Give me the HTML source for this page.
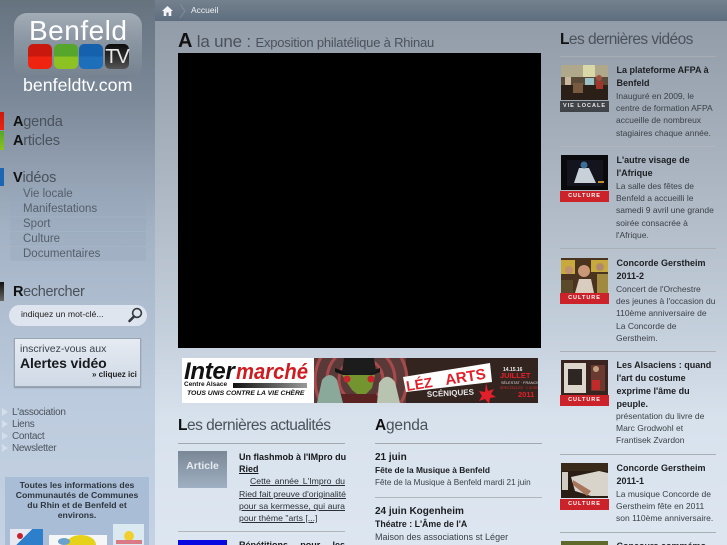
<!DOCTYPE html>
<html lang="fr"><head><meta charset="utf-8"><title>Benfeld TV</title>
<style>
html,body{margin:0;padding:0;width:727px;height:545px;overflow:hidden;background:#dde6f0}
#p{position:absolute;left:0;top:0;width:727px;height:545px;overflow:hidden;background:linear-gradient(#8f99a5 0,#a7b1bd 150px,#c4cfdc 330px,#d8e2ed 420px,#dde6f0 545px);font-family:"Liberation Sans",sans-serif;color:#222}
#p div{position:absolute;white-space:nowrap}
.h{color:#4a525b}
.h b{color:#111;font-weight:bold}
.m{font-size:14.5px;left:13px;color:#4a525b;letter-spacing:-.2px}
.sub{left:10px;width:136px;height:14px;background:rgba(150,165,185,.3);border-radius:2px}
.st{left:23px;font-size:11.5px;color:#555e6b}
.f{left:12px;font-size:10px;color:#4c545e;letter-spacing:-.3px}
.tri{left:2px;width:0;height:0;border-left:6px solid #d3deea;border-top:4px solid transparent;border-bottom:4px solid transparent}
.t{left:616.5px;font-size:9px;font-weight:bold;color:#1d1f22;line-height:13px}
.d{left:616px;font-size:8.5px;color:#3b4046;line-height:12.2px}
.hr{height:1px;background:#a6acb2;left:560px;width:156px}
.lab{left:560px;width:49px;height:11px;background:#cc2229;color:#fff;font-size:5.5px;font-weight:bold;text-align:center;line-height:11px;letter-spacing:1px}
.a{font-size:8.7px;color:#2b2f35;left:239px;width:106px;line-height:12.3px;text-align:justify;text-align-last:justify}
svg{position:absolute}
</style></head><body><div id="p">
<div style="left:0;top:0;width:155px;height:545px;background:linear-gradient(#66737f 0,#7c8999 100px,#a3b2c4 230px,#bccbdd 400px,#c4d2e3 545px)"></div>
<div style="left:155px;top:0;width:572px;height:21px;background:linear-gradient(#74818e,#5e6e7f)"></div>
<svg style="left:161px;top:5px" width="13" height="12" viewBox="0 0 13 12"><path d="M6.5 1 L12 6 H10.3 V11 H7.6 V7.5 H5.4 V11 H2.7 V6 H1 Z" fill="#f2f4f6"/></svg>
<svg style="left:179px;top:3px" width="8" height="16" viewBox="0 0 8 16"><path d="M1 1 L6 8 L1 15" fill="none" stroke="#7f8c99" stroke-width="1"/></svg>
<div style="left:191px;top:5px;font-size:8.5px;color:#eef1f4">Accueil</div>

<!-- logo -->
<div style="left:14px;top:13px;width:128px;height:65px;border-radius:13px;background:linear-gradient(#a2acb6,#8a95a2 45%,#76828f)"></div>
<div style="left:29px;top:15px;font-size:28px;color:#fff;letter-spacing:.5px;line-height:32px">Benfeld</div>
<div style="left:28px;top:44px;width:24px;height:25px;border-radius:5px;background:linear-gradient(#c9190f 50%,#ee2310 50%)"></div>
<div style="left:54px;top:44px;width:24px;height:25px;border-radius:5px;background:linear-gradient(#55a62a 50%,#8cc222 50%)"></div>
<div style="left:79px;top:44px;width:24px;height:25px;border-radius:5px;background:linear-gradient(#1561ad 50%,#1e6fb9 50%)"></div>
<div style="left:105px;top:44px;width:24px;height:25px;border-radius:5px;background:linear-gradient(#0c0c0c,#333 60%,#555);color:#e8e8e8;font-size:20px;text-align:center;line-height:26px;letter-spacing:-1px">TV</div>
<div style="left:23px;top:75px;font-size:17.8px;color:#fff;line-height:20px">benfeldtv.com</div>

<!-- nav -->
<div style="left:0;top:112px;width:4px;height:18px;background:linear-gradient(#c9190f,#ee2310)"></div>
<div style="left:0;top:131px;width:4px;height:19px;background:linear-gradient(#55a62a,#8cc222)"></div>
<div style="left:0;top:168px;width:4px;height:18px;background:#1a66b2"></div>
<div style="left:0;top:282px;width:4px;height:19px;background:linear-gradient(#111,#666)"></div>
<div class="m" style="top:114px"><b style="color:#111">A</b>genda</div>
<div class="m" style="top:133px"><b style="color:#111">A</b>rticles</div>
<div class="m" style="top:170px"><b style="color:#111">V</b>idéos</div>
<div class="m" style="top:284px;letter-spacing:-.35px"><b style="color:#111">R</b>echercher</div>
<div class="sub" style="top:187px"></div><div class="sub" style="top:202px"></div><div class="sub" style="top:217px"></div><div class="sub" style="top:232px"></div><div class="sub" style="top:247px"></div>
<div class="st" style="top:188px">Vie locale</div>
<div class="st" style="top:203px">Manifestations</div>
<div class="st" style="top:218px">Sport</div>
<div class="st" style="top:233px">Culture</div>
<div class="st" style="top:248px">Documentaires</div>

<div style="left:9px;top:305px;width:138px;height:21px;border-radius:11px;background:#dfe5ee"></div>
<div style="left:21px;top:309px;font-size:8.7px;color:#222">indiquez un mot-clé...</div>
<svg style="left:127px;top:306px" width="17" height="17" viewBox="0 0 17 17"><circle cx="10" cy="7" r="4.4" fill="none" stroke="#33383e" stroke-width="1.6"/><path d="M7 10.5 L2.5 15" stroke="#33383e" stroke-width="2.6" stroke-linecap="round"/></svg>

<div style="left:14px;top:338px;width:125px;height:47px;background:linear-gradient(#e6ebf2,#cfd9e6);border:1px solid #9aa5b2;box-shadow:0 1px 1px #8a96a4"></div>
<div style="left:20px;top:343px;font-size:10.5px;color:#3b424a">inscrivez-vous aux</div>
<div style="left:20px;top:355px;font-size:14px;font-weight:bold;color:#17191c;letter-spacing:-.1px">Alertes vidéo</div>
<div style="left:92px;top:370px;font-size:8px;font-weight:bold;color:#222">» cliquez ici</div>

<div class="tri" style="top:408px"></div><div class="tri" style="top:420px"></div><div class="tri" style="top:432px"></div><div class="tri" style="top:444px"></div>
<div class="f" style="top:407px">L'association</div>
<div class="f" style="top:419px">Liens</div>
<div class="f" style="top:431px">Contact</div>
<div class="f" style="top:443px">Newsletter</div>

<div style="left:5px;top:477px;width:144px;height:68px;background:#a9bed6"></div>
<div style="left:5px;top:480px;width:144px;font-size:8.7px;font-weight:bold;color:#2f353d;text-align:center;line-height:10px">Toutes les informations des<br>Communautés de Communes<br>du Rhin et de Benfeld et<br>environs.</div>
<div style="left:10px;top:529px;width:33px;height:16px;background:linear-gradient(135deg,#e8e8f0 45%,#2e7fcb 45%)"></div>
<div style="left:17px;top:533px;width:6px;height:6px;background:#c8202a;border-radius:50%"></div>
<div style="left:49px;top:535px;width:58px;height:10px;background:#f4f6f8"></div>
<div style="left:66px;top:535px;width:30px;height:20px;background:#e7d21a;border-radius:50%"></div>
<div style="left:58px;top:538px;width:12px;height:7px;background:#6aa0cc;border-radius:50%"></div>
<div style="left:113px;top:524px;width:31px;height:21px;background:#dbe9f0"></div>
<div style="left:124px;top:531px;width:10px;height:10px;background:#f2cf30;border-radius:50%"></div>
<div style="left:116px;top:540px;width:26px;height:4px;background:#d97a85"></div>

<!-- main -->
<div class="h" style="left:178px;top:29px;font-size:17px;line-height:24px;letter-spacing:-.2px"><b style="font-size:20px">A</b> la une : <span style="font-size:13px;letter-spacing:-.2px">Exposition philatélique à Rhinau</span></div>
<div style="left:178px;top:53px;width:363px;height:295px;background:#000"></div>

<!-- banners -->
<div style="left:182px;top:358px;width:132px;height:45px;background:#fff"></div>
<div style="left:184px;top:360px;font-size:24px;font-weight:bold;font-style:italic;color:#111;letter-spacing:-.3px;line-height:24px">Inter</div>
<div style="left:236px;top:360px;font-size:22px;font-weight:bold;font-style:italic;color:#cf1c20;line-height:24px;transform:scaleX(.92);transform-origin:left">marché</div>
<div style="left:233px;top:383px;width:74px;height:5px;background:linear-gradient(90deg,#111,#999)"></div>
<div style="left:184px;top:381px;font-size:6.5px;font-weight:bold;color:#111">Centre Alsace</div>
<div style="left:187px;top:390px;font-size:6.85px;font-weight:bold;font-style:italic;color:#111">TOUS UNIS CONTRE LA VIE CHÈRE</div>
<svg style="left:314px;top:358px" width="224" height="45" viewBox="0 0 224 45">
<rect width="224" height="45" fill="#33241f"/>
<rect width="92" height="45" fill="#5a3a38"/>
<circle cx="47" cy="22" r="46" fill="none" stroke="#a84a4c" stroke-width="3"/>
<circle cx="47" cy="22" r="34" fill="none" stroke="#a84a4c" stroke-width="3"/>
<circle cx="47" cy="22" r="22" fill="none" stroke="#a84a4c" stroke-width="3"/>
<path d="M21 10 Q44 20 66 10 L66 14 Q44 24 21 14Z" fill="#151515"/>
<path d="M28 14 L30 0 H60 L62 14 Q44 20 28 14Z" fill="#1c1c1c"/>
<path d="M28 17 H61 L58 30 L48 40 L38 32 Z" fill="#73942f"/>
<circle cx="33" cy="21" r="3.5" fill="#c8232a"/><circle cx="57" cy="21" r="3.5" fill="#c8232a"/>
<path d="M26 36 L62 36 L68 45 H22Z" fill="#5a2220"/>
<path d="M3 45 L8 22 Q16 12 23 22 L29 45Z" fill="#8aa99a"/>
<path d="M63 45 L65 25 Q73 13 81 24 L86 45Z" fill="#b8c3b0"/>
<path d="M89 19 L176 5 L178 24 L92 34Z" fill="#fff"/>
<text x="93" y="33" font-family="Liberation Sans" font-size="14" font-weight="bold" fill="#e3202a" transform="rotate(-9 93 33)">LÉZ</text>
<text x="132" y="27" font-family="Liberation Sans" font-size="15" font-weight="bold" fill="#e3202a" transform="rotate(-9 132 27)">ARTS</text>
<text x="113" y="39" font-family="Liberation Sans" font-size="8" font-weight="bold" fill="#e8e8e8" transform="rotate(-3 113 39)">SCÉNIQUES</text>
<path d="M172 25 l2 8 l6 -2 l-3 5 l5 3 l-6 1 l-1 6 l-4 -5 l-6 2 l3 -5 l-3 -5 l6 1z" fill="#e3202a"/>
<text x="189" y="13" font-family="Liberation Sans" font-size="5" font-weight="bold" fill="#eee">14.15.16</text>
<text x="186" y="20" font-family="Liberation Sans" font-size="7.5" font-weight="bold" fill="#e3202a">JUILLET</text>
<text x="187" y="26" font-family="Liberation Sans" font-size="3.8" fill="#ddd">SÉLESTAT · FRANCE</text>
<text x="186" y="31" font-family="Liberation Sans" font-size="3.5" fill="#c33">SPECTACLES · 1 SOIRÉE</text>
<text x="204" y="39" font-family="Liberation Sans" font-size="7.5" font-weight="bold" fill="#e3202a">2011</text>
</svg>

<!-- actualités -->
<div class="h" style="left:178px;top:416px;font-size:15.5px;line-height:20px;letter-spacing:-.5px"><b>L</b>es dernières actualités</div>
<div style="left:178px;top:443px;width:167px;height:1px;background:#a3a9af"></div>
<div style="left:178px;top:451px;width:49px;height:37px;background:linear-gradient(#7a8796,#9fb0c2)"></div>
<div style="left:178px;top:460px;width:49px;font-size:10.5px;font-weight:bold;color:#e6ebf1;text-align:center">Article</div>
<div class="a" style="top:451px;font-weight:bold;color:#15171a;font-size:9px">Un flashmob à l'IMpro du</div>
<div class="a" style="top:463px;font-weight:bold;color:#15171a;font-size:9px;text-decoration:underline;text-align-last:left">Ried</div>
<div class="a" style="top:475px;text-decoration:underline;text-indent:11px">Cette année L'Impro du</div>
<div class="a" style="top:488px;text-decoration:underline">Ried fait preuve d'originalité</div>
<div class="a" style="top:500px;text-decoration:underline">pour sa kermesse, qui aura</div>
<div class="a" style="top:512px;text-decoration:underline;text-align-last:left">pour thème "arts [...]</div>
<div style="left:178px;top:531px;height:1px;background:#b0b6ba;width:167px"></div>
<div style="left:178px;top:540px;width:49px;height:5px;background:#0808e0"></div>
<div class="a" style="top:539px;font-weight:bold;color:#15171a;font-size:9px">Répétitions pour les</div>

<!-- agenda -->
<div class="h" style="left:375px;top:416px;font-size:15.5px;line-height:20px;letter-spacing:-.2px"><b>A</b>genda</div>
<div style="left:375px;top:443px;width:167px;height:1px;background:#a3a9af"></div>
<div style="left:375px;top:452px;font-size:10px;font-weight:bold;color:#1a1c1f">21 juin</div>
<div style="left:375px;top:465px;font-size:8.4px;font-weight:bold;color:#1a1c1f">Fête de la Musique à Benfeld</div>
<div style="left:375px;top:478px;font-size:8.2px;color:#3b4046">Fête de la Musique à Benfeld mardi 21 juin</div>
<div style="left:375px;top:497px;width:167px;height:1px;background:#b0b6ba"></div>
<div style="left:375px;top:506px;font-size:10px;font-weight:bold;color:#1a1c1f">24 juin Kogenheim</div>
<div style="left:375px;top:519px;font-size:8.8px;font-weight:bold;color:#1a1c1f">Théatre : L'Âme de l'A</div>
<div style="left:375px;top:532px;font-size:9px;color:#3b4046">Maison des associations st Léger</div>

<!-- videos -->
<div class="h" style="left:560px;top:30px;font-size:15.5px;line-height:20px;letter-spacing:-.55px"><b>L</b>es dernières vidéos</div>
<div class="hr" style="top:56px"></div>

<svg style="left:561px;top:65px" width="47" height="35" viewBox="0 0 47 35"><rect width="47" height="35" fill="#5a4a38"/><rect width="47" height="12" fill="#b0a88a"/><rect x="22" y="0" width="12" height="12" fill="#d8d8a8"/><rect y="20" width="47" height="15" fill="#2a2018"/><rect x="24" y="13" width="9" height="7" fill="#9cc0c8"/><rect x="4" y="12" width="6" height="8" fill="#c8b8a0"/><circle cx="38" cy="13" r="3" fill="#a05040"/><rect x="35" y="16" width="7" height="8" fill="#a0352c"/><rect x="12" y="18" width="10" height="10" fill="#775a40"/></svg>
<div class="lab" style="top:101px;background:#404448;color:#e8e8e8">VIE LOCALE</div>
<div class="t" style="top:64px">La plateforme AFPA à<br>Benfeld</div>
<div class="d" style="top:90px">Inauguré en 2009, le<br>centre de formation AFPA<br>accueille de nombreux<br>stagiaires chaque année.</div>
<div class="hr" style="top:146px;background:#b0b6bc"></div>

<svg style="left:561px;top:155px" width="47" height="35" viewBox="0 0 47 35"><rect width="47" height="35" fill="#0a0a0c"/><rect x="6" y="5" width="36" height="26" fill="#14141e"/><path d="M13 28 L18 13 H28 L35 28Z" fill="#c8d0d8"/><circle cx="23" cy="10" r="3.5" fill="#3c6f95"/><rect x="37" y="26" width="6" height="2" fill="#c09030"/></svg>
<div class="lab" style="top:191px">CULTURE</div>
<div class="t" style="top:154px">L'autre visage de<br>l'Afrique</div>
<div class="d" style="top:180px">La salle des fêtes de<br>Benfeld a accueilli le<br>samedi 9 avril une grande<br>soirée consacrée à<br>l'Afrique.</div>
<div class="hr" style="top:248px;background:#a9afb5"></div>

<svg style="left:561px;top:258px" width="47" height="35" viewBox="0 0 47 35"><rect width="47" height="35" fill="#4a3420"/><rect x="0" y="2" width="14" height="14" fill="#c8aa3c"/><rect x="30" y="2" width="17" height="12" fill="#c8aa3c"/><circle cx="23" cy="13" r="6" fill="#c89878"/><circle cx="8" cy="12" r="4" fill="#c09070"/><circle cx="39" cy="9" r="4" fill="#b08870"/><path d="M14 35 L18 21 H30 L33 35Z" fill="#d8cdbf"/><rect y="22" width="12" height="13" fill="#5a4a2a"/><rect x="36" y="16" width="11" height="19" fill="#a08a40"/></svg>
<div class="lab" style="top:293px">CULTURE</div>
<div class="t" style="top:257px">Concorde Gerstheim<br>2011-2</div>
<div class="d" style="top:283px">Concert de l'Orchestre<br>des jeunes à l'occasion du<br>110ème anniversaire de<br>La Concorde de<br>Gerstheim.</div>
<div class="hr" style="top:351px;background:#a9afb5"></div>

<svg style="left:561px;top:360px" width="47" height="35" viewBox="0 0 47 35"><rect width="47" height="35" fill="#3a2420"/><rect x="3" y="3" width="22" height="30" fill="#ddd6cc"/><rect x="7" y="9" width="14" height="16" fill="#2e2622"/><rect x="30" y="5" width="14" height="26" fill="#6a3a30"/><circle cx="35" cy="9" r="3" fill="#c0a080"/><rect x="31" y="20" width="8" height="10" fill="#c02a28"/></svg>
<div class="lab" style="top:395px">CULTURE</div>
<div class="t" style="top:359px">Les Alsaciens : quand<br>l'art du costume<br>exprime l'âme du<br>peuple.</div>
<div class="d" style="top:410px">présentation du livre de<br>Marc Grodwohl et<br>Frantisek Zvardon</div>
<div class="hr" style="top:454px;background:#a9afb5"></div>

<svg style="left:561px;top:463px" width="47" height="35" viewBox="0 0 47 35"><rect width="47" height="35" fill="#2a1e14"/><rect width="47" height="8" fill="#3a2a1a"/><path d="M10 14 L38 8 L47 10 V33 H30 L14 28Z" fill="#d8d4cc"/><rect x="1" y="9" width="6" height="18" fill="#cfcbc3"/><path d="M12 17 L30 28 L26 33 L12 22Z" fill="#a8745a"/></svg>
<div class="lab" style="top:499px">CULTURE</div>
<div class="t" style="top:462px">Concorde Gerstheim<br>2011-1</div>
<div class="d" style="top:488px">La musique Concorde de<br>Gerstheim fête en 2011<br>son 110ème anniversaire.</div>
<div class="hr" style="top:532px;background:#a9afb5"></div>
<div style="left:561px;top:541px;width:47px;height:4px;background:#5f6a2a"></div>
<div class="t" style="top:540px">Concours commémo</div>
</div></body></html>
